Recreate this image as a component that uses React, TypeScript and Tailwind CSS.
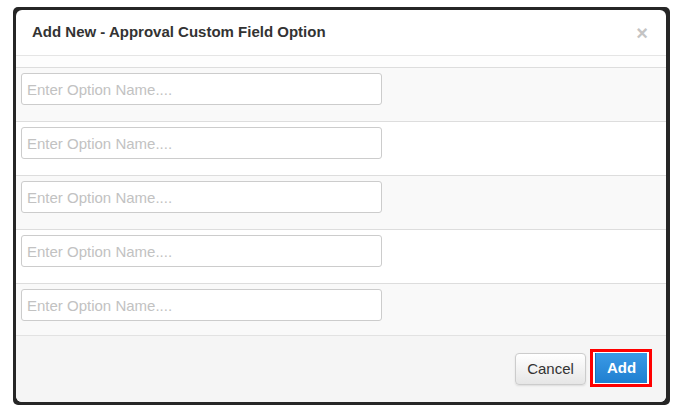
import React from "react";

const rows = [0, 1, 2, 3, 4];

export default function App() {
    return (
        <div
            className="h-[420px] w-[679px] bg-white pl-[13px] pt-[7px]"
            style={{ fontFamily: '"Liberation Sans", Arial, sans-serif' }}
        >
            <div className="h-[398px] w-[657px] rounded-[5px] bg-[#262626] pl-[3px] pt-[3px]">
                <div className="flex h-[392px] w-[650px] flex-col rounded-[6px] bg-white">
                    {/* Header */}
                    <div className="flex h-[46px] shrink-0 items-center justify-between border-b border-[#e5e5e5] pl-[16px] pr-[18px]">
                        <h3 className="text-[15px] font-bold text-[#333]">
                            Add New - Approval Custom Field Option
                        </h3>
                        <button className="text-[20px] font-bold leading-none text-[#c4c4c4]">
                            ×
                        </button>
                    </div>
                    {/* Body */}
                    <div className="h-[11px] shrink-0 bg-[#fdfdfd]"></div>
                    <div className="flex flex-col">
                        {rows.map((i) => (
                            <div
                                key={i}
                                className={
                                    "border-t border-[#dddddd] pl-[5px] pt-[5px] " +
                                    (i === 4 ? "h-[52px] " : "h-[54px] ") +
                                    (i % 2 === 0 ? "bg-[#f9f9f9]" : "bg-white")
                                }
                            >
                                <input
                                    className="h-[32px] w-[361px] rounded-[3px] border border-[#cccccc] bg-white px-[5px] text-[15px] text-[#555] outline-none placeholder:text-[#c2c2c2]"
                                    placeholder="Enter Option Name...."
                                />
                            </div>
                        ))}
                    </div>
                    {/* Footer */}
                    <div className="flex flex-1 items-start justify-end rounded-b-[6px] border-t border-[#e2e2e2] bg-[#f5f5f5] pr-[14px] pt-[13px]">
                        <button className="mt-[4px] h-[32px] w-[71px] rounded-[4px] border border-[#cccccc] bg-gradient-to-b from-white to-[#e6e6e6] text-[15px] text-[#333] shadow-[0_1px_2px_rgba(0,0,0,0.1)]">
                            Cancel
                        </button>
                        <div className="ml-[4px] h-[38px] w-[62px] border-[3px] border-[#ff0000] bg-white pl-[2px] pt-[1px]">
                            <button className="h-[30px] w-[52px] border-l border-[#1b6fb4] bg-gradient-to-b from-[#3a9ae6] to-[#1f7fd0] text-[15px] font-bold text-white">
                                Add
                            </button>
                        </div>
                    </div>
                </div>
            </div>
        </div>
    );
}
